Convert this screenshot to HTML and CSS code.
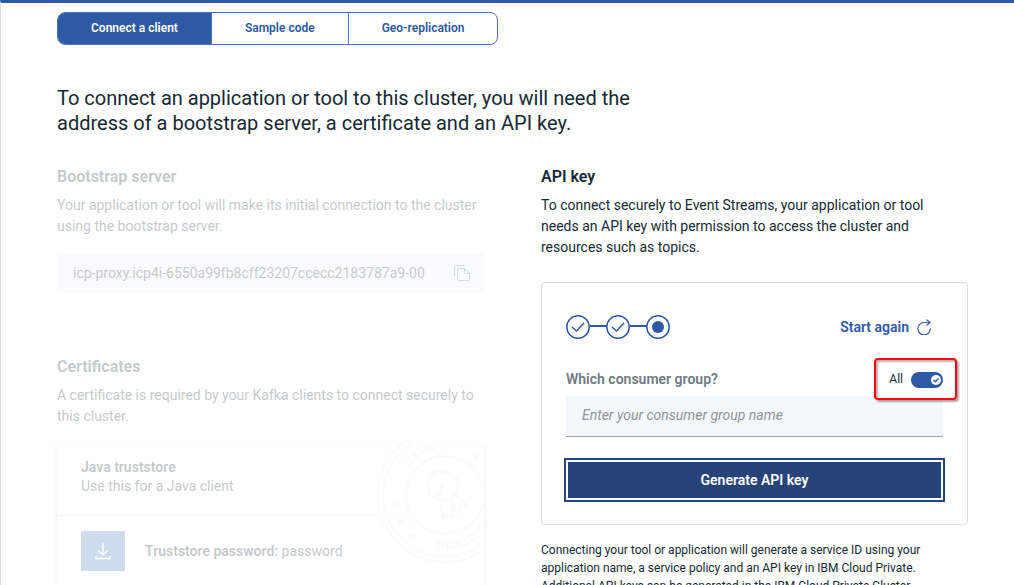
FILE: index.html
```html
<!DOCTYPE html>
<html lang="en">
<head>
<meta charset="utf-8">
<title>Connect to this cluster</title>
<link rel="stylesheet" href="styles.css">
</head>
<body>
<main class="panel">
  <nav class="tabs" aria-label="Connection options">
    <button type="button" class="tab tab-active">Connect a client</button>
    <button type="button" class="tab">Sample code</button>
    <button type="button" class="tab">Geo-replication</button>
  </nav>
  <h1 class="intro">To connect an application or tool to this cluster, you will need the address of a bootstrap server, a certificate and an API key.</h1>
  <div class="columns">
    <div class="column faded">
      <section class="bootstrap">
        <h2 class="title">Bootstrap server</h2>
        <p class="text">Your application or tool will make its initial connection to the cluster using the bootstrap server.</p>
        <div class="address">
          <span class="address-text">icp-proxy.icp4i-6550a99fb8cff23207ccecc2183787a9-00</span>
          <button type="button" class="icon-button" aria-label="Copy address">
            <svg width="16" height="16" viewBox="0 0 16 16" fill="none" stroke="currentColor"><path d="M1.5 10.5H.5v-9a1 1 0 0 1 1-1h8.500v1M4.500 3.500H10.500L15.500 8.500v6a1 1 0 0 1-1 1h-10a1 1 0 0 1-1-1v-10a1 1 0 0 1 1-1zM10.500 3.500v4a1 1 0 0 0 1 1h4"/></svg>
          </button>
        </div>
      </section>
      <section>
        <h2 class="title">Certificates</h2>
        <p class="text">A certificate is required by your Kafka clients to connect securely to this cluster.</p>
        <div class="cert">
          <div class="cert-head">
            <h3 class="cert-name">Java truststore</h3>
            <p class="cert-use">Use this for a Java client</p>
          </div>
          <div class="cert-body">
            <button type="button" class="download" aria-label="Download truststore">
              <svg width="16" height="18" viewBox="0 0 16 18" fill="none" stroke="currentColor" stroke-width="1.300"><path d="M8 1v12M3 8l5 5 5-5M1 14v2.500h14V14"/></svg>
            </button>
            <p class="password"><strong class="strong">Truststore password:</strong> password</p>
          </div>
          <svg class="stamp" width="136" height="136" viewBox="-68 -68 136 136" fill="none" stroke="currentColor" stroke-width="1.500" aria-hidden="true">
            <circle class="stamp-ground" r="67"/>
            <circle r="62"/>
            <circle r="39"/>
            <path id="arc-top" d="M-46 0A46 46 0 0 1 46 0" stroke="none"/>
            <path id="arc-bottom" d="M-55 0A55 55 0 0 0 55 0" stroke="none"/>
            <text class="stamp-text"><textPath href="#arc-top" startOffset="32">JAVA</textPath></text>
            <text class="stamp-text"><textPath href="#arc-bottom" startOffset="75">TRUSTSTORE</textPath></text>
            <g fill="currentColor" stroke="none">
              <path id="star" d="M-50 4l1 2.500 2.500.2-1.800 1.800.6 2.500-2.300-1.300-2.300 1.300.6-2.500-1.800-1.800 2.500-.2z"/>
              <use href="#star" x="5" y="18"/><use href="#star" x="18" y="33"/><use href="#star" x="81" y="-46"/>
            </g>
            <path stroke-width="2" d="M-4-23q4-2 7 2q5-1 6 3q5 2 3 6q3 4 0 7q1 5-4 6q-2 5-6 3q-4 4-8 0q-5 1-6-4q-5-1-4-6q-4-4 0-8q-1-5 4-6q2-5 8-3z"/>
            <path stroke-width="3" d="M-10-2l5 2 4-13"/>
            <path stroke-width="2" d="M-4 9l2 15 4-5 6 3-2-16M5 7l9 11 1-6 8-1L12 1"/>
          </svg>
        </div>
      </section>
    </div>
    <section class="column">
      <h2 class="title">API key</h2>
      <p class="text text-narrow">To connect securely to Event Streams, your application or tool needs an API key with permission to access the cluster and resources such as topics.</p>
      <form class="card">
        <div class="row">
          <svg class="steps" width="104" height="24" viewBox="0 0 104 24" fill="none" stroke="currentColor" stroke-width="1.500" role="img" aria-label="Step 3 of 3">
            <circle cx="12" cy="12" r="11.200"/><circle cx="52" cy="12" r="11.200"/><circle cx="92" cy="12" r="11.200"/>
            <circle cx="92" cy="12" r="6" fill="currentColor" stroke="none"/>
            <path stroke-width="2" d="M24 11h16M64 11h16"/>
            <path d="M6 12l4.500 4L18 8M46 12l4.500 4L58 8"/>
          </svg>
          <button type="button" class="restart">Start again
            <svg width="15" height="16" viewBox="0 0 15 16" fill="none" stroke="currentColor" stroke-width="1.200"><path d="M13.300 9.300A6.200 6.200 0 1 1 7 3.500h6M9.500.6l3.500 2.900-3.500 3"/></svg>
          </button>
        </div>
        <div class="row field-head">
          <label class="field-label" for="group">Which consumer group?</label>
          <label class="toggle">All
            <span class="switch">
              <input class="switch-input" type="checkbox" checked>
              <svg class="switch-knob" width="10" height="10" viewBox="0 0 10 10" aria-hidden="true"><circle cx="5" cy="5" r="5" fill="#fff"/><path d="M2.500 5l1.800 1.800L7.500 3.500" fill="none" stroke="#2d59a5" stroke-width="1.500"/></svg>
            </span>
          </label>
        </div>
        <input class="field" id="group" type="text" placeholder="Enter your consumer group name">
        <button type="button" class="generate">Generate API key</button>
      </form>
      <p class="note">Connecting your tool or application will generate a service ID using your application name, a service policy and an API key in IBM Cloud Private. Additional API keys can be generated in the IBM Cloud Private Cluster</p>
    </section>
  </div>
</main>
</body>
</html>
```
FILE: styles.css
```css
* { box-sizing: border-box; }
body, h1, h2, h3, p { margin: 0; }
body {
  background: #fff;
  color: #152935;
  font-family: Roboto, "Liberation Sans", sans-serif;
  font-size: 14px;
  line-height: 21px;
}
button, input { font: inherit; }
button { border: 0; padding: 0; background: none; cursor: pointer; }
svg { display: block; flex: none; }

.panel {
  height: 100vh;
  overflow: auto;
  scrollbar-width: none;
  border-top: 3px solid #2d59a5;
  border-left: 1px solid #d8dde1;
  padding: 9px 46px 0 56px;
}

.tabs {
  display: flex;
  width: fit-content;
  border: 1px solid #4a74bb;
  border-radius: 8px;
  overflow: hidden;
}
.tab {
  height: 31px;
  padding: 0 33px;
  color: #2d59a5;
  font-size: 12px;
  font-weight: 600;
}
.tab + .tab { border-left: 1px solid #4a74bb; }
.tab-active { background: #2d59a5; color: #fff; }

.intro {
  max-width: 600px;
  margin-top: 41px;
  font-size: 20px;
  line-height: 25px;
  font-weight: 400;
}

.columns {
  display: grid;
  grid-template-columns: minmax(0, 1fr) minmax(0, 1fr);
  gap: 57px;
  margin-top: 29px;
}
.faded { opacity: 0.25; }
.title { margin-bottom: 6px; font-size: 16px; line-height: 24px; font-weight: 600; }
.text-narrow { max-width: 400px; }

.bootstrap { margin-bottom: 62px; }
.address {
  display: flex;
  align-items: center;
  justify-content: space-between;
  height: 40px;
  margin-top: 16px;
  padding: 0 14px 0 16px;
  background: #f0f3fa;
}
.address-text { overflow: hidden; white-space: nowrap; }
.icon-button { color: #4178be; }

.cert {
  position: relative;
  height: 160px;
  margin-top: 16px;
  overflow: hidden;
  box-shadow: 0 3px 4px rgba(0, 0, 0, 0.3);
}
.cert-head { height: 73px; padding: 15px 24px; border-bottom: 1px solid #dfe3e6; line-height: 19px; }
.cert-name { font-size: 14px; font-weight: 600; }
.cert-body { display: flex; align-items: center; gap: 20px; padding: 15px 24px; }
.download {
  display: grid;
  place-items: center;
  width: 44px;
  height: 40px;
  background: #4178be;
  color: #fff;
}
.strong { font-weight: 600; }
.stamp { position: absolute; top: -16px; right: -29px; color: #eceff1; }
.stamp-ground { fill: #fff; }
.stamp-text { fill: currentColor; stroke: none; font-size: 12px; font-weight: 600; }

.card {
  margin-top: 24px;
  padding: 32px 24px 24px;
  border: 1px solid #d8dde1;
  border-radius: 4px;
}
.row { display: flex; align-items: center; justify-content: space-between; color: #2d59a5; }
.restart {
  display: flex;
  align-items: center;
  gap: 8px;
  margin-right: 11px;
  color: #2d59a5;
  font-weight: 600;
}
.field-head { margin-top: 30px; margin-bottom: 6px; }
.field-label { color: #6f7b83; font-weight: 600; }
.toggle {
  position: relative;
  display: flex;
  align-items: center;
  gap: 8px;
  color: #152935;
  font-size: 12px;
}
.toggle::after {
  content: "";
  position: absolute;
  inset: -11px -14px -10px -15px;
  border: 2px solid #ff0505;
  border-radius: 4px;
  box-shadow: 2px 2px 2px rgba(0, 0, 0, 0.35), inset 2px 2px 2px rgba(0, 0, 0, 0.3);
  pointer-events: none;
}
.switch { position: relative; display: block; height: 16px; }
.switch-input {
  appearance: none;
  display: block;
  width: 32px;
  height: 16px;
  margin: 0;
  border-radius: 8px;
  background: #2d59a5;
}
.switch-knob { position: absolute; top: 3px; right: 2px; pointer-events: none; }
.field {
  display: block;
  width: 100%;
  height: 41px;
  padding: 0 16px 3px;
  border: 0;
  border-bottom: 1px solid #98a3aa;
  border-radius: 0;
  background: #f4f8fc;
  color: #152935;
}
.field::placeholder { color: #8d969c; font-style: italic; opacity: 1; }
.generate {
  display: block;
  width: 100%;
  height: 40px;
  margin-top: 23px;
  border: 2px solid #fff;
  background: #264478;
  box-shadow: 0 0 0 2px #264478;
  color: #fff;
  font-weight: 600;
}
.note { margin-top: 16px; font-size: 12px; line-height: 18px; }
```
